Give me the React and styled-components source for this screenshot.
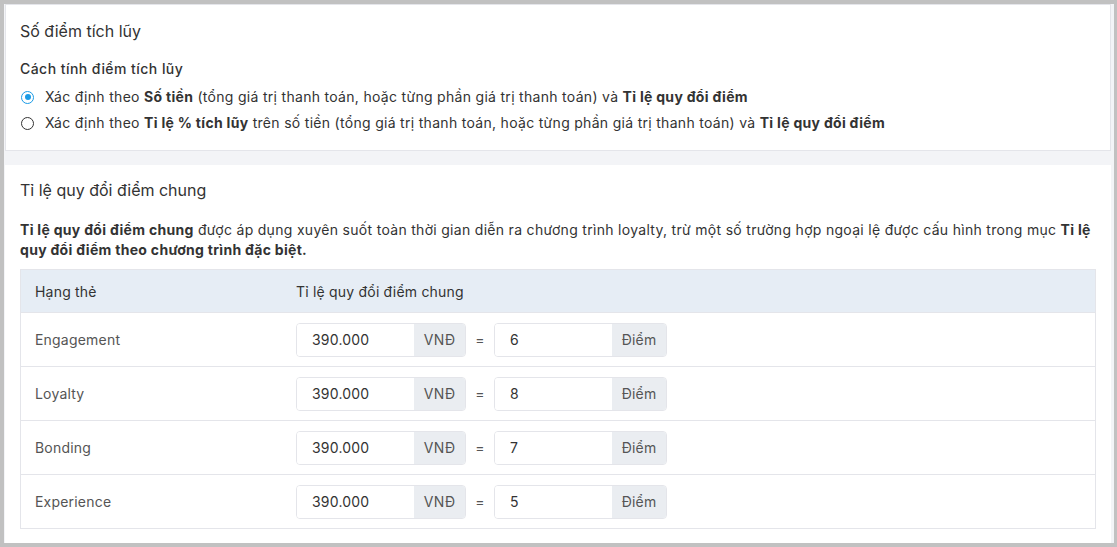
import React, { useState } from 'react';
import styled, { createGlobalStyle } from 'styled-components';

const GlobalStyle = createGlobalStyle`
  html, body {
    margin: 0;
    padding: 0;
    background: #c1c1c1;
  }
  body {
    font-family: Inter, "Noto Sans", sans-serif;
    color: #333;
  }
`;

const Frame = styled.div`
  width: 1117px;
  height: 547px;
  box-sizing: border-box;
  border-style: solid;
  border-color: #c1c1c1;
  border-width: 4px 3px 4px 4px;
  background: #c1c1c1;
`;

const Page = styled.div`
  height: 100%;
  box-sizing: border-box;
  background: #f3f4f7;
  padding: 0 3px 0 1px;
  display: flex;
  flex-direction: column;
  gap: 14px;
  overflow: hidden;
`;

const Card = styled.section`
  background: #fff;
  border: 1px solid ${p => (p.bordered ? '#e4e5ea' : 'transparent')};
  box-sizing: border-box;
  padding: ${p => p.pad};
  flex: ${p => (p.grow ? 1 : 'none')};
`;

const Title = styled.h2`
  margin: 0;
  font-size: 16px;
  font-weight: 400;
  line-height: 22px;
  color: #333;
`;

const SubTitle = styled.div`
  margin-top: 17px;
  font-size: 14px;
  font-weight: 500;
  line-height: 20px;
  letter-spacing: 0.45px;
  color: #333;
`;

const RadioList = styled.div`
  margin-top: 8px;
  display: flex;
  flex-direction: column;
  gap: 6px;
`;

const RadioRow = styled.label`
  display: flex;
  align-items: center;
  gap: 11px;
  font-size: 14px;
  letter-spacing: 0.3px;
  line-height: 20px;
  color: #333;
  cursor: pointer;
`;

const RadioDot = styled.span`
  width: 13px;
  height: 13px;
  margin-left: 1px;
  box-sizing: border-box;
  border-radius: 50%;
  border: 1.5px solid ${p => (p.checked ? '#1a9be6' : '#333')};
  display: flex;
  align-items: center;
  justify-content: center;
  flex: none;

  &::after {
    content: '';
    width: 6px;
    height: 6px;
    border-radius: 50%;
    background: ${p => (p.checked ? '#1a9be6' : 'transparent')};
  }
`;

const Paragraph = styled.p`
  margin: 19px 0 9px;
  font-size: 14px;
  letter-spacing: 0.3px;
  line-height: 20px;
  color: #333;
`;

const Table = styled.div`
  border: 1px solid #e4e5ea;
`;

const Row = styled.div`
  display: grid;
  grid-template-columns: 261px 1fr;
  align-items: center;
  height: ${p => (p.head ? '42px' : '53px')};
  padding: 0 14px;
  background: ${p => (p.head ? '#e6edf5' : '#fff')};
  border-top: ${p => (p.head ? 'none' : '1px solid #e4e5ea')};
  font-size: 14px;
  letter-spacing: 0.2px;
  color: ${p => (p.head ? '#333' : '#555')};
`;

const Rate = styled.div`
  display: flex;
  align-items: center;
`;

const Group = styled.div`
  display: flex;
  height: 34px;
  box-sizing: border-box;
  border: 1px solid #e4e5ea;
  border-radius: 4px;
  overflow: hidden;
`;

const Input = styled.input`
  width: 117px;
  box-sizing: border-box;
  border: none;
  outline: none;
  padding: 0 15px;
  font-family: inherit;
  font-size: 14px;
  letter-spacing: 0.2px;
  color: #333;
  background: #fff;
`;

const Addon = styled.span`
  width: ${p => p.w}px;
  display: flex;
  align-items: center;
  justify-content: center;
  background: #eaedf1;
  font-size: 14px;
  letter-spacing: 0.2px;
  color: #555;
`;

const Equals = styled.span`
  width: 28px;
  text-align: center;
  font-size: 14px;
  color: #555;
`;

const tiers = [
  { name: 'Engagement', money: '390.000', points: '6' },
  { name: 'Loyalty', money: '390.000', points: '8' },
  { name: 'Bonding', money: '390.000', points: '7' },
  { name: 'Experience', money: '390.000', points: '5' },
];

export default function App() {
  const [mode, setMode] = useState(0);

  return (
    <>
      <GlobalStyle />
      <Frame>
        <Page>
          <Card bordered pad="15px 15px 17px 14px">
            <Title>Số điểm tích lũy</Title>
            <SubTitle>Cách tính điểm tích lũy</SubTitle>
            <RadioList>
              <RadioRow onClick={() => setMode(0)}>
                <RadioDot checked={mode === 0} />
                <span>
                  Xác định theo <b>Số tiền</b> (tổng giá trị thanh toán, hoặc từng phần giá trị thanh toán) và <b>Tỉ lệ quy đổi điểm</b>
                </span>
              </RadioRow>
              <RadioRow onClick={() => setMode(1)}>
                <RadioDot checked={mode === 1} />
                <span>
                  Xác định theo <b>Tỉ lệ % tích lũy</b> trên số tiền (tổng giá trị thanh toán, hoặc từng phần giá trị thanh toán) và <b>Tỉ lệ quy đổi điểm</b>
                </span>
              </RadioRow>
            </RadioList>
          </Card>

          <Card grow pad="13px 14px 0 14px">
            <Title>Tỉ lệ quy đổi điểm chung</Title>
            <Paragraph>
              <b>Tỉ lệ quy đổi điểm chung</b> được áp dụng xuyên suốt toàn thời gian diễn ra chương trình loyalty, trừ một số trường hợp ngoại lệ được cấu hình trong mục <b>Tỉ lệ quy đổi điểm theo chương trình đặc biệt.</b>
            </Paragraph>
            <Table>
              <Row head>
                <span>Hạng thẻ</span>
                <span>Tỉ lệ quy đổi điểm chung</span>
              </Row>
              {tiers.map(t => (
                <Row key={t.name}>
                  <span>{t.name}</span>
                  <Rate>
                    <Group>
                      <Input defaultValue={t.money} />
                      <Addon w={51}>VNĐ</Addon>
                    </Group>
                    <Equals>=</Equals>
                    <Group>
                      <Input defaultValue={t.points} />
                      <Addon w={54}>Điểm</Addon>
                    </Group>
                  </Rate>
                </Row>
              ))}
            </Table>
          </Card>
        </Page>
      </Frame>
    </>
  );
}
